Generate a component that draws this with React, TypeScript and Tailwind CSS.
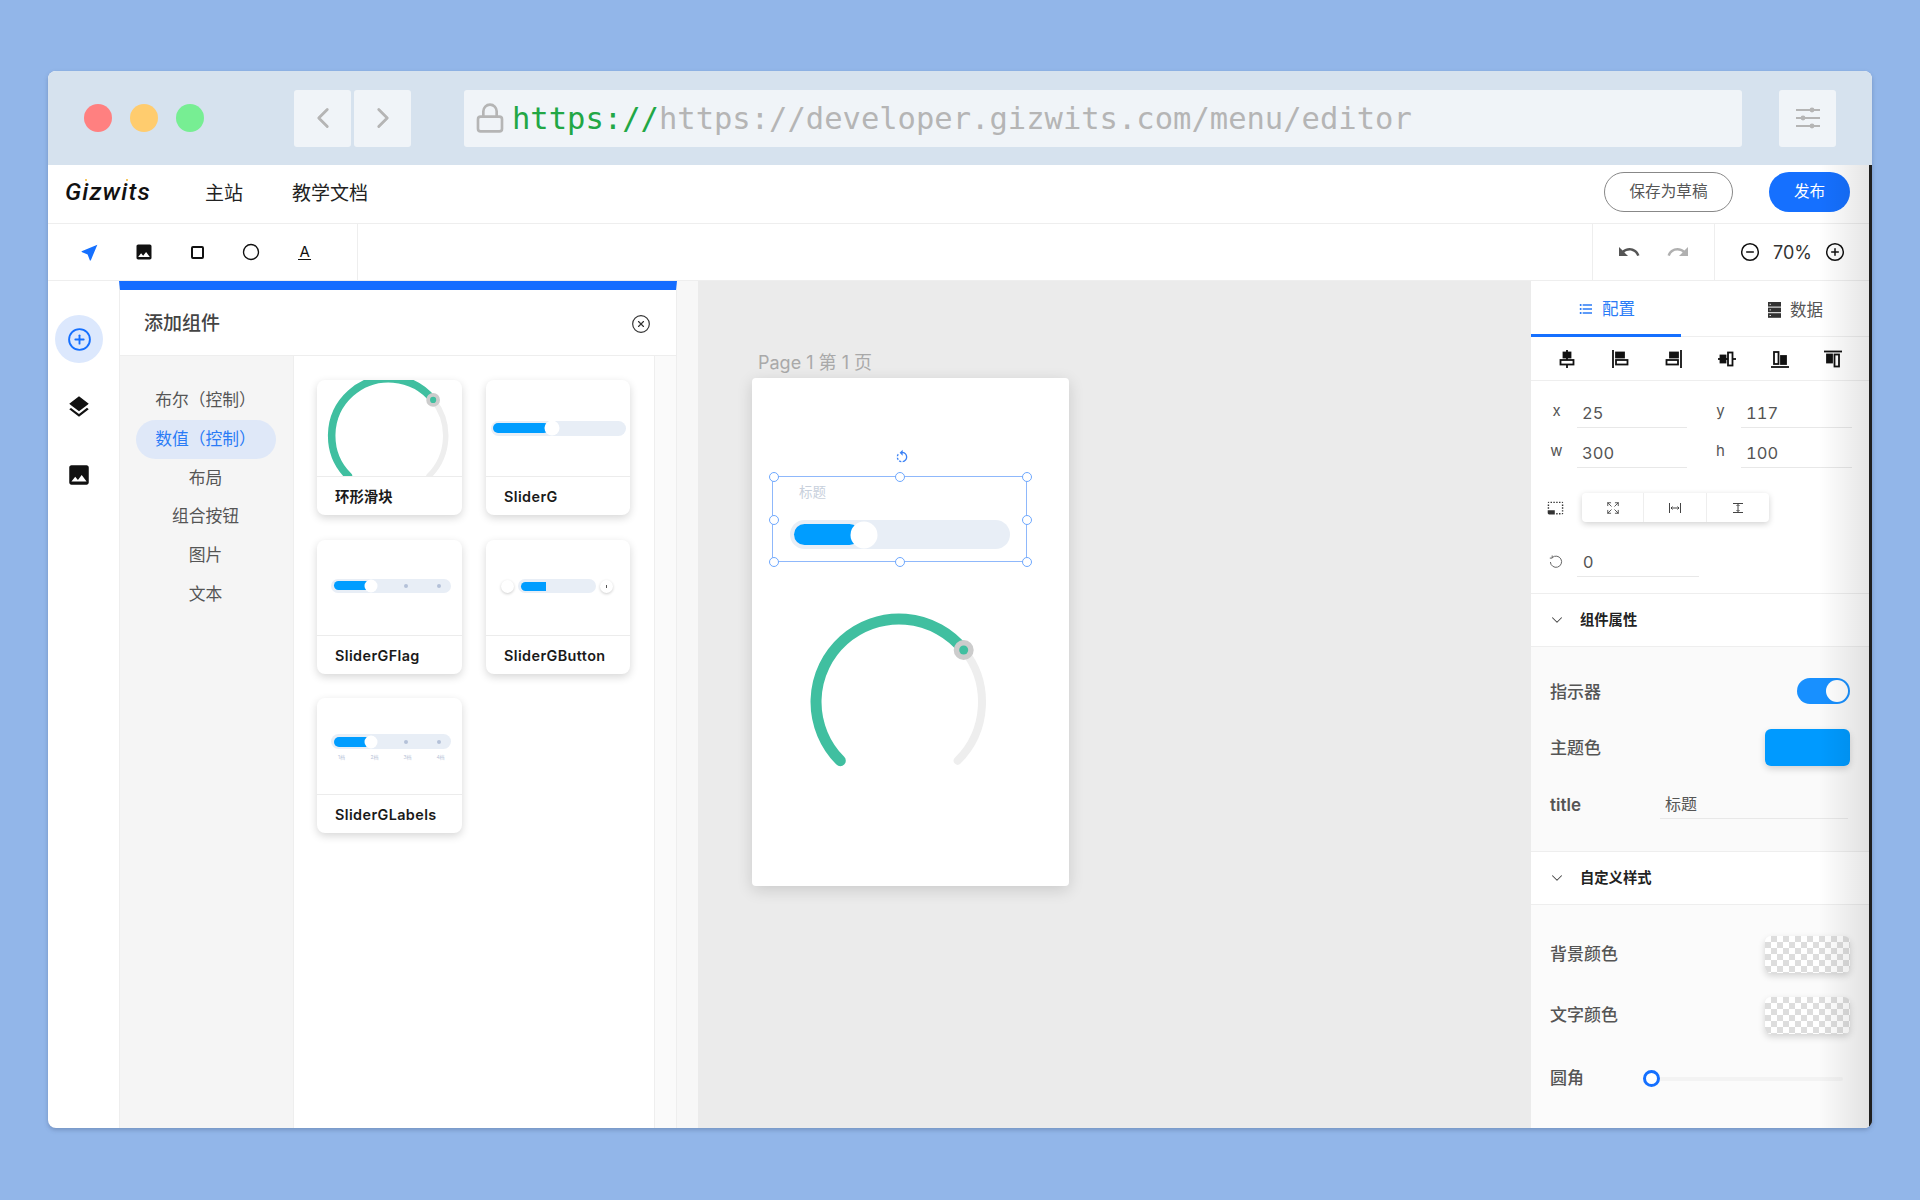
import React from "react";
import { ChevronLeft, ChevronRight, Lock, CirclePlus, CircleMinus, CircleX, ChevronDown, Circle, Expand } from "lucide-react";
import { MdImage, MdLayers, MdNearMe, MdUndo, MdRedo, MdFormatListBulleted, MdPhotoSizeSelectSmall, MdRotateLeft } from "react-icons/md";

const sans = "font-['Inter','Noto_Sans_CJK_SC',sans-serif]";

function Settings() {
  return (
    <svg width="26" height="24" viewBox="0 0 26 24" fill="none" stroke="#b5b5b5" strokeWidth="2">
      <path d="M1 4h24M1 12h24M1 20h24" />
      <circle cx="17" cy="4" r="2.4" fill="#b5b5b5" stroke="none" />
      <circle cx="8" cy="12" r="2.4" fill="#b5b5b5" stroke="none" />
      <circle cx="17" cy="20" r="2.4" fill="#b5b5b5" stroke="none" />
    </svg>
  );
}

function StorageIcon() {
  return (
    <svg width="13" height="16" viewBox="0 0 13 16">
      <rect x="0" y="0" width="13" height="4.6" fill="#333" />
      <rect x="0" y="5.6" width="13" height="4.6" fill="#333" />
      <rect x="0" y="11.2" width="13" height="4.6" fill="#333" />
      <rect x="1.5" y="1.8" width="1.5" height="1" fill="#ddd" />
      <rect x="1.5" y="7.4" width="1.5" height="1" fill="#ddd" />
      <rect x="1.5" y="13" width="1.5" height="1" fill="#ddd" />
    </svg>
  );
}

function AlignIcon({ kind }: { kind: number }) {
  const s = { fill: "none", stroke: "#111", strokeWidth: 1.8 };
  const solid = { fill: "#111", stroke: "#111", strokeWidth: 1.8 };
  const shapes: Record<number, React.ReactNode> = {
    0: (<><path d="M9 0v18" {...s} /><rect x="5.5" y="2.5" width="7" height="5" {...solid} /><rect x="2.5" y="10" width="13" height="4.5" fill="#fff" stroke="#111" strokeWidth="1.8" /></>),
    1: (<><path d="M2 0v18" {...s} /><rect x="5" y="2.5" width="8" height="5" {...solid} /><rect x="5" y="10" width="11.5" height="4.5" {...s} /></>),
    2: (<><path d="M16 0v18" {...s} /><rect x="5" y="2.5" width="8" height="5" {...solid} /><rect x="1.5" y="10" width="11.5" height="4.5" {...s} /></>),
    3: (<><path d="M0 9h18" {...s} /><rect x="2.5" y="5.5" width="5" height="7" {...solid} /><rect x="10" y="2.5" width="4.5" height="13" fill="#fff" stroke="#111" strokeWidth="1.8" /></>),
    4: (<><path d="M0 17h18" {...s} /><rect x="10" y="6" width="5" height="8" {...solid} /><rect x="3" y="2" width="4.5" height="12" {...s} /></>),
    5: (<><path d="M0 1.5h18" {...s} /><rect x="3" y="4.5" width="5" height="8" {...solid} /><rect x="10.5" y="4.5" width="4.5" height="12" {...s} /></>),
  };
  return <svg width="18" height="18" viewBox="0 0 18 18">{shapes[kind]}</svg>;
}

function Gauge({ scale, className }: { scale: number; className?: string }) {
  return (
    <svg width={200 * scale} height={200 * scale} viewBox="0 0 200 200" className={className}>
      <path d="M 164.68 47.98 A 83 83 0 0 1 158.69 158.69" fill="none" stroke="#eeeeee" strokeWidth="8" strokeLinecap="round" />
      <path d="M 41.31 158.69 A 83 83 0 1 1 164.68 47.98" fill="none" stroke="#40bfa0" strokeWidth="11" strokeLinecap="round" />
      <circle cx="164.68" cy="47.98" r="10" fill="#cccccc" />
      <circle cx="164.68" cy="47.98" r="4.5" fill="#40bfa0" />
    </svg>
  );
}

function Handle({ className }: { className: string }) {
  return <span className={`absolute w-[10px] h-[10px] rounded-full bg-white border border-[#6ea8fe] ${className}`} />;
}

function Track({ w, h, fill, inset, thumb, dots, square, thumbX }: { w: number; h: number; fill: number; inset: number; thumb?: number; thumbX?: number; dots?: number[]; square?: boolean }) {
  return (
    <div className="relative rounded-full bg-[#e8eef6]" style={{ width: w, height: h }}>
      <div
        className={`absolute bg-[#009dff] ${square ? "rounded-l-full" : "rounded-full"}`}
        style={{ left: inset, top: inset, bottom: inset, width: fill }}
      />
      {dots?.map((d) => (
        <span key={d} className="absolute w-[4px] h-[4px] rounded-full bg-[#b4c1d8] top-1/2 -translate-y-1/2" style={{ left: d - 2 }} />
      ))}
      {thumb ? (
        <span className="absolute rounded-full bg-white top-1/2 -translate-y-1/2 -translate-x-1/2" style={{ left: thumbX, width: thumb, height: thumb }} />
      ) : null}
    </div>
  );
}

function Card({ label, children, h = 135, divide = 97 }: { label: string; children?: React.ReactNode; h?: number; divide?: number }) {
  const latin = /[a-z]/i.test(label);
  return (
    <div className="flex flex-col rounded-lg bg-white shadow-[0_3px_8px_rgba(0,0,0,0.16)] overflow-hidden" style={{ height: h }}>
      <div className="relative overflow-hidden border-b border-[#ececec] flex items-center justify-center" style={{ height: divide }}>
        {children}
      </div>
      <div className={`flex-1 flex items-center pl-[18px] pt-[2px] text-[14.4px] font-semibold text-[#1a1a1a] ${latin ? "tracking-[0.4px]" : ""}`}>{label}</div>
    </div>
  );
}

function Prop({ label, value, inputClass }: { label: string; value: string; inputClass: string }) {
  return (
    <div className="flex items-center">
      <span className="w-[27px] text-[15px] text-[#555] text-center pr-[14px] -mt-[3px]">{label}</span>
      <div className={`h-[30px] border-b border-[#e8e8e8] pl-[5px] pt-[2px] flex items-center text-[16.5px] tabular-nums text-[#555] ${inputClass}`}>{value}</div>
    </div>
  );
}

function Swatch({ className }: { className: string }) {
  return <div className={`w-[85px] h-[37px] rounded-[6px] shadow-[0_3px_7px_rgba(0,0,0,0.16)] ${className}`} />;
}

const checker = "bg-[conic-gradient(#dddddd_25%,#ffffff_0_50%,#dddddd_0_75%,#ffffff_0)] bg-[length:12px_12px]";

export default function App() {
  return (
    <div className={`min-h-[1200px] bg-[#92b6e9] pl-[48px] pt-[71px] ${sans}`}>
      <div className="relative w-[1824px] h-[1057px] rounded-[8px] overflow-hidden bg-white flex flex-col shadow-[0_2px_4px_rgba(60,80,120,0.35)]">
        {/* browser chrome */}
        <div className="h-[94px] shrink-0 bg-[#d6e2ee] flex items-center pl-[36px]">
          <div className="flex gap-[18px]">
            <span className="w-[28px] h-[28px] rounded-full bg-[#ff8080]" />
            <span className="w-[28px] h-[28px] rounded-full bg-[#ffcc6e]" />
            <span className="w-[28px] h-[28px] rounded-full bg-[#77ee93]" />
          </div>
          <div className="flex gap-[3px] ml-[90px]">
            <div className="w-[57px] h-[57px] rounded-[3px] bg-[#f0f4f8] flex items-center justify-center"><ChevronLeft size={34} strokeWidth={2} className="text-[#b5b5b5]" /></div>
            <div className="w-[57px] h-[57px] rounded-[3px] bg-[#f0f4f8] flex items-center justify-center"><ChevronRight size={34} strokeWidth={2} className="text-[#b5b5b5]" /></div>
          </div>
          <div className="ml-[53px] w-[1278px] h-[57px] rounded-[3px] bg-[#f0f4f8] flex items-center pl-[10px] font-['DejaVu_Sans_Mono',monospace] text-[30.5px] text-[#b5b5b5]">
            <Lock size={32} strokeWidth={2} className="shrink-0 text-[#b5b5b5]" />
            <span className="ml-[6px] pt-[2px] text-[#22a745]">https://</span>
            <span className="pt-[2px]">https://developer.gizwits.com/menu/editor</span>
          </div>
          <div className="ml-[37px] w-[57px] h-[57px] rounded-[3px] bg-[#f0f4f8] flex items-center justify-center"><Settings /></div>
        </div>

        {/* app header */}
        <div className="h-[59px] shrink-0 border-b border-[#eeeeee] flex items-center pl-[17px] pr-[22px]">
          <span className="relative w-[140px] -mt-[3px] font-['Roboto',sans-serif] italic font-medium text-[24.5px] tracking-[1.1px] text-[#111]">
            Gizwits
            <span className="absolute left-[20px] top-[5px] w-[2px] h-[2px] rounded-full bg-[#f5b82e]" />
            <span className="absolute left-[61px] top-[5px] w-[2px] h-[2px] rounded-full bg-[#f5b82e]" />
          </span>
          <span className="text-[19px] text-[#222]">主站</span>
          <span className="ml-[49px] text-[19px] text-[#222]">教学文档</span>
          <button className="ml-auto mb-[5px] w-[129px] h-[40px] rounded-full border border-[#888] text-[15.6px] text-[#555]">保存为草稿</button>
          <button className="ml-[36px] mb-[5px] w-[81px] h-[40px] rounded-full bg-[#1570ff] text-[15.6px] text-white">发布</button>
        </div>

        {/* toolbar */}
        <div className="h-[57px] shrink-0 border-b border-[#eeeeee] flex items-stretch">
          <div className="w-[310px] border-r border-[#eeeeee] flex items-center pl-[15px]">
            <span className="w-[53.7px] flex justify-center"><MdNearMe size={21} className="text-[#1570ff]" /></span>
            <span className="w-[53.7px] flex justify-center"><MdImage size={20} className="text-[#111]" /></span>
            <span className="w-[53.7px] flex justify-center"><span className="w-[13px] h-[13px] border-2 border-[#111] rounded-[2px]" /></span>
            <span className="w-[53.7px] flex justify-center"><Circle size={18} strokeWidth={1.8} className="text-[#111]" /></span>
            <span className="w-[53.7px] flex justify-center"><span className="text-[#111] text-[15px] leading-[14px] border-b-[1.5px] border-[#111] px-[1px]">A</span></span>
          </div>
          <div className="flex-1" />
          <div className="w-[122px] border-l border-[#eeeeee] flex items-center justify-center gap-[25px]">
            <MdUndo size={24} className="text-[#555]" />
            <MdRedo size={24} className="text-[#b0b0b0]" />
          </div>
          <div className="w-[158px] border-l border-[#eeeeee] flex items-center pl-[25px] text-[#111]">
            <CircleMinus size={20} strokeWidth={1.8} />
            <span className="ml-[13px] w-[42px] text-[18px] text-[#333]">70%</span>
            <span className="ml-[10px]"><CirclePlus size={20} strokeWidth={1.8} /></span>
          </div>
        </div>

        {/* body */}
        <div className="flex-1 min-h-0 flex">
          {/* rail */}
          <div className="w-[71px] shrink-0 flex flex-col items-center pt-[34px] pr-[9px]">
            <div className="w-[48px] h-[48px] rounded-full bg-[#dce8fd] flex items-center justify-center"><CirclePlus size={25} strokeWidth={1.8} className="text-[#1570ff]" /></div>
            <MdLayers size={26} className="mt-[31px] text-[#111]" />
            <MdImage size={26} className="mt-[42px] text-[#111]" />
          </div>

          {/* add component panel */}
          <div className="w-[558px] shrink-0 flex flex-col border-t-[9px] border-[#146cff] border-x border-x-[#eeeeee]">
            <div className="h-[66px] shrink-0 border-b border-[#eeeeee] flex items-center justify-between pl-[24px] pr-[25px]">
              <span className="pt-[4px] text-[19px] font-medium text-[#444]">添加组件</span>
              <CircleX size={20} strokeWidth={1.4} className="mt-[2px] text-[#333]" />
            </div>
            <div className="flex-1 flex min-h-0">
              <div className="w-[173px] shrink-0 bg-[#f5f5f5] pt-[25.5px] pr-[2px] text-[16.8px] text-[#555] flex flex-col items-center">
                {["布尔（控制）", "数值（控制）", "布局", "组合按钮", "图片", "文本"].map((t, i) => (
                  <div key={t} className={`w-[140px] h-[38.7px] shrink-0 flex items-center justify-center rounded-full ${i === 1 ? "bg-[#dfe8f8] text-[#2a7bf6]" : ""}`}>
                    {t}
                  </div>
                ))}
              </div>
              <div className="w-[362px] shrink-0 border-l border-[#eeeeee] border-r pl-[23px] pt-[24px]">
                <div className="grid grid-cols-[145px_144px] gap-x-[24px] gap-y-[24.5px]">
                  <Card label="环形滑块">
                    <Gauge scale={0.687} className="absolute left-[3px] -top-[13px]" />
                  </Card>
                  <Card label="SliderG">
                    <Track w={135} h={15} fill={56} inset={2.5} thumb={15} thumbX={61} />
                  </Card>
                  <Card label="SliderGFlag" h={134} divide={96}>
                    <div className="ml-[3px] -mt-[3px]">
                      <Track w={120} h={14} fill={37} inset={2.5} thumb={13} thumbX={40} dots={[75, 108]} />
                    </div>
                  </Card>
                  <Card label="SliderGButton" h={134} divide={96}>
                    <div className="flex items-center gap-[4px] -ml-[2px] -mt-[2px]">
                      <span className="w-[13px] h-[13px] rounded-full bg-white shadow-[0_1px_3px_rgba(0,0,0,0.2)]" />
                      <Track w={78} h={14} fill={25} inset={2.5} square />
                      <span className="w-[13px] h-[13px] rounded-full bg-white shadow-[0_1px_3px_rgba(0,0,0,0.2)] flex items-center justify-center"><span className="w-[1px] h-[3px] bg-[#555]" /></span>
                    </div>
                  </Card>
                  <Card label="SliderGLabels">
                    <div className="w-[120px] ml-[3px] mt-[3px]">
                      <Track w={120} h={15} fill={37} inset={2.5} thumb={13} thumbX={40} dots={[75, 108]} />
                      <div className="grid grid-cols-4 mt-[5px] -ml-[6px] text-[5px] leading-[7px] text-[#b8c4d8] text-center w-[132px]">
                        <span>1档</span><span>2档</span><span>3档</span><span>4档</span>
                      </div>
                    </div>
                  </Card>
                </div>
              </div>
              <div className="flex-1 bg-[#fafafa]" />
            </div>
          </div>

          {/* strip */}
          <div className="w-[21px] shrink-0 bg-[#f7f7f7]" />

          {/* canvas */}
          <div className="w-[833px] shrink-0 bg-[#ebebeb] pl-[54px] pt-[69px] flex flex-col">
            <div className="h-[28px] pl-[6px] text-[18px] leading-[26px] text-[#a9a9a9]">Page 1 第 1 页</div>
            <div className="relative w-[317px] h-[508px] rounded-[4px] bg-white shadow-[0_4px_16px_rgba(0,0,0,0.14)]">
              <MdRotateLeft size={16} className="absolute left-[142px] top-[71px] text-[#3b82f6]" />
              <div className="absolute left-[20px] top-[98px] w-[255px] h-[86px] border border-[#8fb8fb]">
                <span className="absolute left-[26px] top-[5px] text-[13.5px] leading-[20px] text-[#c8d0dc]">标题</span>
                <div className="absolute left-[17px] top-[43px]">
                  <Track w={220} h={29} fill={66} inset={4} thumb={27} thumbX={74} />
                </div>
              </div>
              <Handle className="left-[17px] top-[94px]" />
              <Handle className="left-[143px] top-[94px]" />
              <Handle className="left-[270px] top-[94px]" />
              <Handle className="left-[17px] top-[137px]" />
              <Handle className="left-[270px] top-[137px]" />
              <Handle className="left-[17px] top-[179px]" />
              <Handle className="left-[143px] top-[179px]" />
              <Handle className="left-[270px] top-[179px]" />
              <Gauge scale={1} className="absolute left-[47px] top-[224px]" />
            </div>
          </div>

          {/* properties */}
          <div className="w-[338px] shrink-0 flex flex-col text-[#555]">
            <div className="h-[56px] shrink-0 flex border-b border-[#eeeeee]">
              <div className="w-[150px] h-[56px] border-b-[3px] border-[#1570ff] flex items-center pl-[47px] pt-[3px] gap-[8px] text-[#2a7bf6] text-[16.5px]">
                <MdFormatListBulleted size={16} /> 配置
              </div>
              <div className="flex-1 flex items-center pl-[87px] pt-[3px] gap-[9px] text-[16.5px] text-[#555]">
                <StorageIcon /> 数据
              </div>
            </div>
            <div className="h-[44px] shrink-0 border-b border-[#eeeeee] flex items-center pl-[27px] gap-[35.3px]">
              {[0, 1, 2, 3, 4, 5].map((k) => <AlignIcon key={k} kind={k} />)}
            </div>
            <div className="h-[213px] shrink-0 border-b border-[#eeeeee] pl-[19px] pt-[17px]">
              <div className="grid grid-cols-[164px_140px] gap-y-[10px]">
                <Prop label="x" value="25" inputClass="w-[110px]" />
                <Prop label="y" value="117" inputClass="w-[111px]" />
                <Prop label="w" value="300" inputClass="w-[110px]" />
                <Prop label="h" value="100" inputClass="w-[111px]" />
              </div>
              <div className="mt-[25px] flex items-center">
                <MdPhotoSizeSelectSmall size={18} className="text-[#333] w-[17px] -ml-[3px]" />
                <div className="ml-[18px] w-[187px] h-[29px] rounded-[4px] bg-white shadow-[0_2px_6px_rgba(0,0,0,0.18)] grid grid-cols-3 divide-x divide-[#eeeeee] items-center">
                  <div className="h-full flex items-center justify-center"><Expand size={14} strokeWidth={1.5} className="text-[#444]" /></div>
                  <div className="h-full flex items-center justify-center">
                    <svg width="12" height="10" viewBox="0 0 12 10" fill="none" stroke="#444" strokeWidth="1"><path d="M.5 0v10M11.5 0v10M2 5h8M3.5 3.5 2 5l1.5 1.5M8.5 3.5 10 5 8.5 6.5" /></svg>
                  </div>
                  <div className="h-full flex items-center justify-center">
                    <svg width="10" height="10" viewBox="0 0 10 10" fill="none" stroke="#444" strokeWidth="1"><path d="M0 .5h10M0 9.5h10M5 1.5v7M3.5 3 5 1.5 6.5 3M3.5 7 5 8.5 6.5 7" /></svg>
                  </div>
                </div>
              </div>
              <div className="mt-[25px] flex items-center">
                <span className="w-[14px] -ml-[1px]"><svg width="14" height="14" viewBox="0 0 14 14" fill="none" stroke="#666" strokeWidth="1"><path d="M3.2 2.6A5.6 5.6 0 1 1 1.4 7M3.2.5v2.6H.8" /></svg></span>
                <div className="ml-[14px] w-[122px] h-[30px] border-b border-[#e8e8e8] pl-[6px] pt-[1px] flex items-center text-[16.5px] text-[#555]">0</div>
              </div>
            </div>

            <div className="h-[53px] shrink-0 border-b border-[#eeeeee] flex items-center pl-[17px] text-[14.3px] font-semibold text-[#222]">
              <ChevronDown size={18} strokeWidth={1.4} className="text-[#444]" />
              <span className="ml-[14px]">组件属性</span>
            </div>
            <div className="h-[205px] shrink-0 bg-[#fafafa] border-b border-[#eeeeee] px-[19px] pt-[31px] text-[17px] font-medium text-[#555]">
              <div className="h-[26px] flex items-center justify-between">
                <span className="pt-[3px]">指示器</span>
                <span className="relative w-[53px] h-[26px] rounded-full bg-[#1890ff]">
                  <span className="absolute right-[2px] top-[2px] w-[22px] h-[22px] rounded-full bg-white" />
                </span>
              </div>
              <div className="mt-[25px] h-[37px] flex items-center justify-between">
                <span className="pt-[2px]">主题色</span>
                <Swatch className="bg-[#009aff]" />
              </div>
              <div className="mt-[23px] flex items-center">
                <span className="w-[110px] pt-[3px] font-semibold">title</span>
                <div className="w-[188px] h-[30px] border-b border-[#e8e8e8] pl-[5px] flex items-center text-[16px] font-normal">标题</div>
              </div>
            </div>
            <div className="h-[53px] shrink-0 border-b border-[#eeeeee] flex items-center pl-[17px] text-[14.3px] font-semibold text-[#222]">
              <ChevronDown size={18} strokeWidth={1.4} className="text-[#444]" />
              <span className="ml-[14px]">自定义样式</span>
            </div>
            <div className="flex-1 bg-[#fbfbfb] px-[19px] pt-[31px] text-[17px] font-medium text-[#555]">
              <div className="h-[37px] flex items-center justify-between">
                <span className="pt-[1px]">背景颜色</span>
                <Swatch className={checker} />
              </div>
              <div className="mt-[24px] h-[37px] flex items-center justify-between">
                <span>文字颜色</span>
                <Swatch className={checker} />
              </div>
              <div className="mt-[26px] h-[37px] flex items-center">
                <span className="w-[102px]">圆角</span>
                <div className="relative w-[191px] h-[4px] rounded-full bg-[#f3f3f3]">
                  <span className="absolute -left-[9px] -top-[7px] w-[17px] h-[17px] rounded-full bg-white border-[3px] border-[#1570ff]" />
                </div>
              </div>
            </div>
          </div>
          <div className="flex-1 min-w-0 bg-[#1f1f1f]" />
        </div>

        {/* right edge */}
        <div className="absolute right-0 top-[94px] bottom-0 w-[3px] bg-[#1f1f1f]" />
        <div className="absolute right-[3px] top-[94px] bottom-0 w-[50px] bg-gradient-to-r from-transparent to-black/10 pointer-events-none" />
      </div>
    </div>
  );
}
